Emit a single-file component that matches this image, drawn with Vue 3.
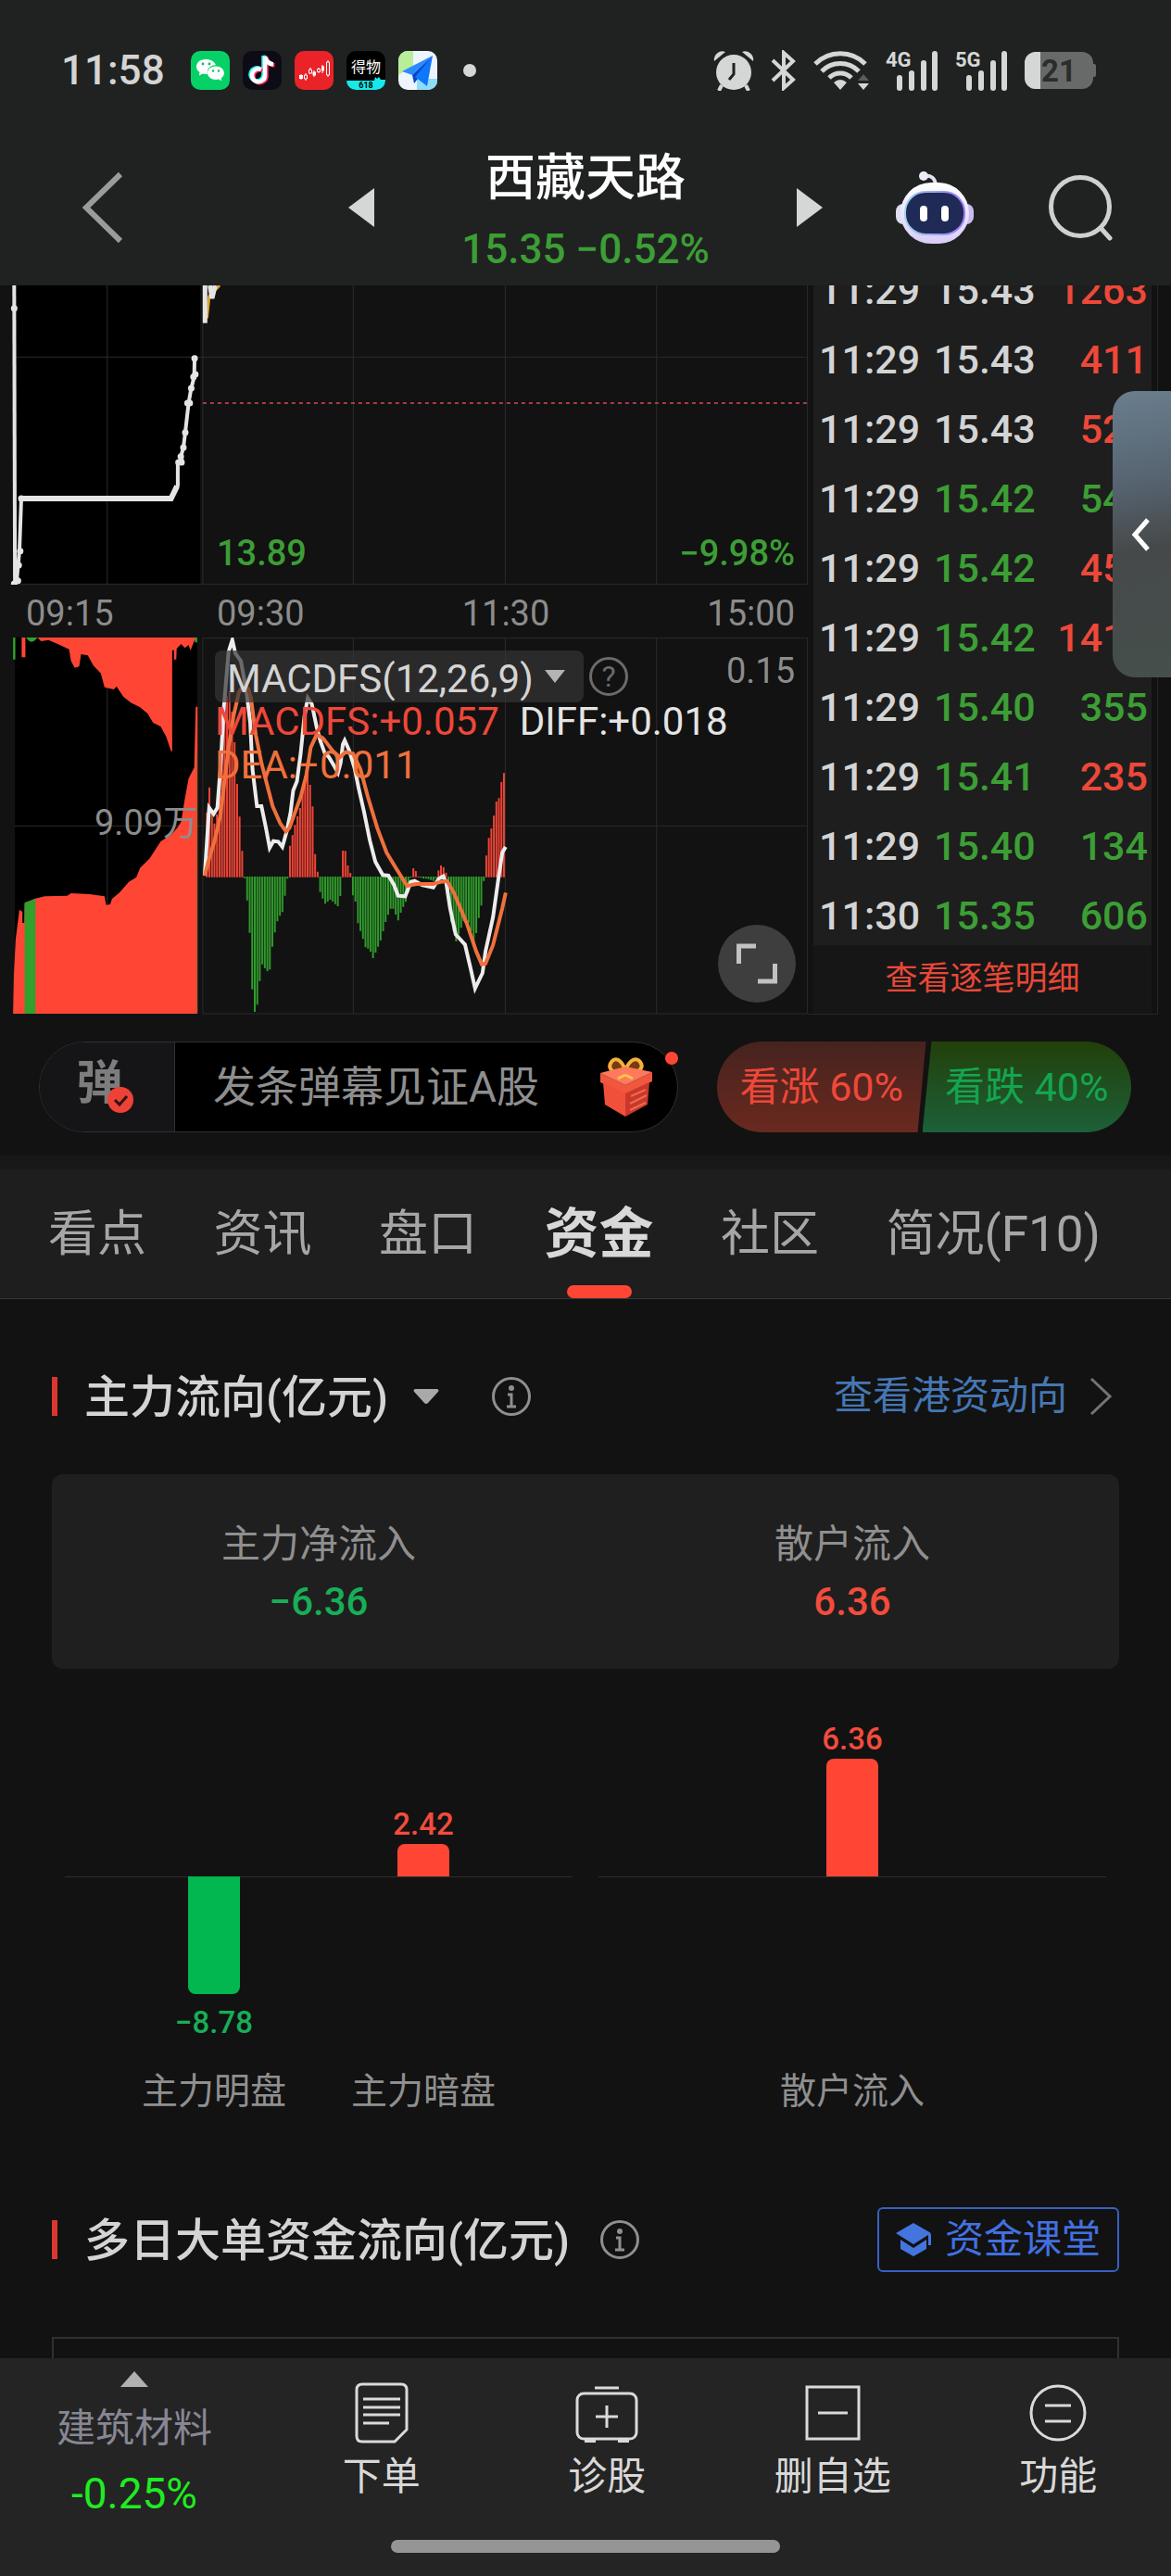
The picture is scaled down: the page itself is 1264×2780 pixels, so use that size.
<script setup>
import { ref } from 'vue'

const indicador = ref('MACDFS(12,26,9)')
const danmu = ref('')

const ticks = ref([
  { time: '11:29', price: '15.43', vol: '1263', p: 'flat', v: 'up' },
  { time: '11:29', price: '15.43', vol: '411', p: 'flat', v: 'up' },
  { time: '11:29', price: '15.43', vol: '528', p: 'flat', v: 'up' },
  { time: '11:29', price: '15.42', vol: '546', p: 'down', v: 'down' },
  { time: '11:29', price: '15.42', vol: '452', p: 'down', v: 'up' },
  { time: '11:29', price: '15.42', vol: '1417', p: 'down', v: 'up' },
  { time: '11:29', price: '15.40', vol: '355', p: 'down', v: 'down' },
  { time: '11:29', price: '15.41', vol: '235', p: 'down', v: 'up' },
  { time: '11:29', price: '15.40', vol: '134', p: 'down', v: 'down' },
  { time: '11:30', price: '15.35', vol: '606', p: 'down', v: 'down' },
])

const tabs = ['看点', '资讯', '盘口', '资金', '社区', '简况(F10)']
const activeTab = ref('资金')

// Each group is scaled to its own largest value
const groups = [
  [
    { label: '主力明盘', value: -8.78, text: '−8.78' },
    { label: '主力暗盘', value: 2.42, text: '2.42' },
  ],
  [{ label: '散户流入', value: 6.36, text: '6.36' }],
]

const barHeight = (group, item) => {
  const max = Math.max(...group.map((g) => Math.abs(g.value)))
  return Math.round((Math.abs(item.value) / max) * 127) + 'px'
}

// MACD histogram: outline points, bars are interpolated one per minute
const zero = 800
const outline = [
  [545, 800], [556, 545], [562, 500], [568, 590], [575, 630], [582, 590], [590, 480], [600, 300],
  [612, 170], [625, 300], [636, 520], [644, 640], [651, 760], [655, 800], [662, 875], [669, 985],
  [676, 1180], [683, 1242], [690, 1205], [697, 1115], [703, 1075], [712, 1102], [722, 1102],
  [730, 1015], [737, 970], [745, 930], [757, 910], [765, 840], [770, 800], [776, 700], [790, 630],
  [805, 570], [815, 480], [825, 430], [831, 510], [838, 580], [844, 730], [851, 785], [853, 800],
  [857, 845], [870, 885], [885, 870], [905, 893], [912, 855], [914, 800], [917, 715], [924, 710],
  [931, 760], [938, 785], [941, 800], [944, 855], [951, 870], [958, 945], [970, 990], [978, 1025],
  [990, 1032], [999, 1060], [1010, 1030], [1020, 1000], [1032, 945], [1045, 900], [1055, 900],
  [1065, 943], [1075, 905], [1090, 870], [1100, 800], [1106, 770], [1112, 775], [1118, 795],
  [1125, 800], [1150, 805], [1165, 812], [1172, 785], [1179, 760], [1192, 772], [1197, 800],
  [1205, 935], [1213, 960], [1219, 1013], [1232, 970], [1245, 930], [1258, 950], [1270, 1020],
  [1280, 940], [1287, 905], [1293, 850], [1296, 800], [1300, 760], [1305, 690], [1313, 655],
  [1320, 620], [1328, 555], [1334, 555], [1340, 518], [1347, 448], [1355, 500],
]

const valueAt = (x) => {
  for (let i = 1; i < outline.length; i++) {
    const [x0, y0] = outline[i - 1]
    const [x1, y1] = outline[i]
    if (x <= x1) return y0 + ((y1 - y0) * (x - x0)) / (x1 - x0)
  }
  return zero
}

let redBars = ''
let greenBars = ''
for (let i = 0; i < 119; i++) {
  const x = 554 + i * 6.74
  const y = valueAt(x)
  if (y < zero) redBars += `M${x.toFixed(1)} ${zero}V${y.toFixed(0)}`
  else greenBars += `M${x.toFixed(1)} ${zero - 2}V${(y + 2).toFixed(0)}`
}

const diffLine =
  '548,795 560,575 572,595 582,575 590,450 600,240 612,70 622,32 630,75 645,100 660,200 670,300 676,450 688,570 700,570 712,640 722,705 732,683 745,685 756,702 768,650 778,590 785,520 795,490 805,400 815,280 824,220 835,240 848,315 858,360 870,400 880,410 895,440 905,462 912,430 918,370 923,357 935,390 950,450 960,510 975,590 990,680 1005,750 1025,793 1040,795 1055,825 1066,860 1085,862 1100,815 1110,812 1130,825 1160,833 1175,805 1187,797 1195,820 1205,900 1220,985 1245,1018 1260,1095 1272,1160 1280,1140 1292,1110 1300,1040 1320,930 1335,800 1345,720 1354,702'
const deaLine =
  '548,795 560,740 575,680 590,600 600,500 612,380 625,280 640,200 650,185 665,190 672,220 685,340 700,430 715,500 730,570 750,625 766,652 775,640 790,590 805,540 820,470 832,380 848,338 865,350 890,390 910,412 925,395 945,400 965,450 985,540 1010,640 1035,720 1060,770 1090,828 1115,822 1160,822 1180,815 1197,812 1215,850 1250,950 1275,1040 1290,1082 1300,1080 1320,1020 1345,900 1354,850'
</script>

<template>
  <div class="app">
    <header>
      <div class="status">
        <span class="clock">11:58</span>
        <div class="apps">
          <svg viewBox="0 0 42 42">
            <rect width="42" height="42" rx="10" fill="#06d167" />
            <path d="M16 9c-6 0-10 3.600-10 8 0 2.600 1.400 4.600 3.500 6l-.6 3.500 4-2a13 13 0 0 0 5 .4c-1-6 4-10 9-9.500C26 11.500 21.500 9 16 9z" fill="#fff" />
            <path d="M27 16.500c-5.200 0-9 3.200-9 7.200s3.800 7.200 9 7.200c1 0 2-.1 3-.4l3.300 1.800-.6-3c2-1.300 3.200-3.300 3.200-5.600 0-4-4-7.200-8.900-7.200z" fill="#fff" />
            <circle cx="13" cy="14" r="1.400" fill="#06c160" /><circle cx="20" cy="14" r="1.400" fill="#06c160" />
            <circle cx="24" cy="21.500" r="1.200" fill="#06c160" /><circle cx="30" cy="21.500" r="1.200" fill="#06c160" />
          </svg>
          <svg viewBox="0 0 42 42">
            <rect width="42" height="42" rx="10" fill="#0c0b16" />
            <g fill="none" stroke-width="4.500">
              <path d="M20 20a7 7 0 1 0 4 6V6c1 5 4 8 9 8.500" stroke="#25f4ee" transform="translate(-1.500 -1)" />
              <path d="M20 20a7 7 0 1 0 4 6V6c1 5 4 8 9 8.500" stroke="#fe2c55" transform="translate(1.500 1)" />
              <path d="M20 20a7 7 0 1 0 4 6V6c1 5 4 8 9 8.500" stroke="#fff" />
            </g>
          </svg>
          <svg viewBox="0 0 42 42">
            <rect width="42" height="42" rx="10" fill="#e92328" />
            <path d="M7 25v6M12 24v8M17 18v7M21 21v7M26 18v6M30 15v9M36 10v18" stroke="#fff" stroke-width="1" />
            <path d="M5 26h4v4H5zM19.500 22.500h3.500v4h-3.500zM29 16.500h3v5h-3z" fill="#fff" />
            <path d="M10.500 26h3v4h-3zM15.500 20h3v4h-3zM24.500 19.500h3v3h-3zM34.500 12h3v14h-3z" fill="#e92328" stroke="#fff" />
          </svg>
          <svg viewBox="0 0 42 42">
            <clipPath id="dw"><rect width="42" height="42" rx="10" /></clipPath>
            <g clip-path="url(#dw)">
              <rect width="42" height="42" fill="#000" />
              <path d="M0 32h30l1-4 2 2 2-2 2 3h5v11H0z" fill="#17e9ea" />
              <text x="21" y="23" text-anchor="middle" font-size="16" fill="#fff">得物</text>
              <text x="21" y="40" text-anchor="middle" font-size="9" font-weight="700" fill="#000">618</text>
            </g>
          </svg>
          <svg viewBox="0 0 42 42">
            <clipPath id="mp"><rect width="42" height="42" rx="10" /></clipPath>
            <g clip-path="url(#mp)">
              <rect width="42" height="42" fill="#eef4fb" />
              <path d="M0 0h16v16L0 26z" fill="#b8ee9a" />
              <path d="M20 30h22v12H20z" fill="#8edcf7" />
              <path d="M37 5 4 22l11 4z" fill="#2a8bff" />
              <path d="M37 5 15 26l2 9 4-5z" fill="#0546c8" />
              <path d="M37 5 18 28l13 10z" fill="#0d78fb" />
            </g>
          </svg>
        </div>
        <i class="more-dot"></i>
        <div class="signals">
          <svg width="44" height="44" viewBox="0 0 44 44" fill="#d5d7d6">
            <path d="M1 12a9 9 0 0 1 12-10zM43 12A9 9 0 0 0 31 2z" />
            <circle cx="22" cy="24" r="19" />
            <path d="m9 38-3 6M35 38l3 6" stroke="#d5d7d6" stroke-width="4" />
            <path d="M22 14v12l-5 6" fill="none" stroke="#202221" stroke-width="3" />
          </svg>
          <svg width="28" height="44" viewBox="0 0 28 44" fill="none" stroke="#d5d7d6" stroke-width="4">
            <path d="m2 11 22 21-10 9V3l10 9L2 33" />
          </svg>
          <svg width="60" height="44" viewBox="0 0 60 44" fill="none" stroke="#d5d7d6" stroke-width="5">
            <path d="M2 15a38 38 0 0 1 54 0M9 23a28 28 0 0 1 40 0M17 30a17 17 0 0 1 24 0" />
            <path d="m22 35q7-6 14 0l-7 8z" fill="#d5d7d6" stroke="none" />
            <path d="m48 33 6-7 6 7z" fill="#5a5c5b" stroke="none" />
            <path d="m48 36h12l-6 7z" fill="#d5d7d6" stroke="none" />
          </svg>
          <svg v-for="net in ['4G', '5G']" :key="net" class="net" width="57" height="52" viewBox="0 -4 57 52">
            <text x="0" y="18" font-size="22" font-weight="700" fill="#d5d7d6">{{ net }}</text>
            <path d="M15 30v11M28 25v16M41 14v27M53 4v37" stroke="#d5d7d6" stroke-width="6" stroke-linecap="round" />
          </svg>
          <svg width="77" height="40" viewBox="0 0 77 40">
            <clipPath id="bt"><rect width="74" height="40" rx="12" /></clipPath>
            <g clip-path="url(#bt)">
              <rect width="74" height="40" fill="#686a69" />
              <rect width="17" height="40" fill="#d5d7d6" />
            </g>
            <rect x="72" y="13" width="5" height="14" rx="2" fill="#686a69" />
            <text x="37" y="32" text-anchor="middle" font-size="33" font-weight="700" fill="#2b2d2c">21</text>
          </svg>
        </div>
      </div>

      <nav class="topbar">
        <button class="back" aria-label="返回">
          <svg width="46" height="78" viewBox="0 0 46 78" fill="none" stroke="#9a9c9b" stroke-width="6"><path d="M42 3 5 39l37 36" /></svg>
        </button>
        <div class="switcher">
          <button aria-label="上一只"><svg width="28" height="42" viewBox="0 0 28 42"><path d="M28 0v42L0 21z" fill="#d5d7d6" /></svg></button>
          <div class="stock">
            <h1>西藏天路</h1>
            <p>15.35 −0.52%</p>
          </div>
          <button aria-label="下一只"><svg width="28" height="42" viewBox="0 0 28 42"><path d="M0 0v42l28-21z" fill="#d5d7d6" /></svg></button>
        </div>
        <div class="tools">
          <button aria-label="助手">
            <svg width="84" height="80" viewBox="0 0 84 80">
              <defs>
                <linearGradient id="head" x1="0" y1="0" x2="0" y2="1"><stop offset="0" stop-color="#fff" /><stop offset="1" stop-color="#d9cdf8" /></linearGradient>
                <linearGradient id="rim" x1="0" y1="0" x2="1" y2="0"><stop offset="0" stop-color="#9dd4f0" /><stop offset="1" stop-color="#9a78f2" /></linearGradient>
              </defs>
              <path d="M30 6q12-2 13 10" fill="none" stroke="#e4e2f0" stroke-width="4" />
              <circle cx="30" cy="6" r="5" fill="#eeedf7" />
              <rect x="0" y="36" width="16" height="22" rx="8" fill="#dfdcf3" />
              <rect x="68" y="36" width="16" height="22" rx="8" fill="#c9bdf0" />
              <rect x="5" y="13" width="74" height="66" rx="33" fill="url(#head)" />
              <rect x="10" y="23" width="64" height="46" rx="22" fill="#202a56" stroke="url(#rim)" stroke-width="2" />
              <rect x="26" y="38" width="8" height="17" rx="4" fill="#fff" />
              <rect x="49" y="38" width="8" height="17" rx="4" fill="#fff" />
            </svg>
          </button>
          <button aria-label="搜索">
            <svg width="72" height="72" viewBox="0 0 72 72" fill="none" stroke="#cfd1d0" stroke-width="5" stroke-linecap="round"><circle cx="35" cy="35" r="31.500" /><path d="m57 58 10 11" /></svg>
          </button>
        </div>
      </nav>
    </header>

    <main>
      <section class="market">
        <div class="charts">
          <div class="price-chart">
            <svg viewBox="0 24 2163 969" preserveAspectRatio="none">
              <rect x="40" y="24" width="496" height="967" fill="#000" />
              <path class="grid" d="M287 24V992M543 24V992M946 24V992M1353 24V992M1758 24V992M2162 24V992M40 256H2162M40 991H2162" />
              <path class="line" d="M543 405H2162" stroke="#a83a4c" stroke-width="2" stroke-dasharray="4 4" />
              <path class="line" d="M554 130 560 60 575 40 588 24" stroke="#e0a030" stroke-width="3" />
              <path class="line" d="M549 24V146" stroke="#e4e4e4" stroke-width="5" />
              <path class="line" d="M562 24 568 66 576 24" stroke="#e4e4e4" stroke-width="5" />
              <path class="line" d="M38 24 40 990" stroke="#e4e4e4" stroke-width="4" />
              <path class="line" d="M44 988 52 884 57 714M458 714 476 672V597H488L485 575 491 549 496 500 505 405 512 357 520 320 521 260" stroke="#e4e4e4" stroke-width="4" />
              <path class="line" d="M57 714H458L474 674" stroke="#e4e4e4" stroke-width="6" />
              <path class="line dots" d="M38 98h.1M38 990h.1M48 980h.1M50 930h.1M54 884h.1M57 714h.1M478 597h.1M486 597h.1M484 578h.1M491 549h.1M496 500h.1M502 405h.1M508 405h.1M512 357h.1M518 320h.1M523 312h.1M521 260h.1" />
            </svg>
            <span class="low">13.89</span>
            <span class="low-pct">−9.98%</span>
          </div>

          <div class="axis">
            <span>09:15</span><span>09:30</span><span class="mid">11:30</span><span class="end">15:00</span>
          </div>

          <div class="macd-chart">
            <svg viewBox="0 24 2163 1221" preserveAspectRatio="none">
              <rect x="40" y="24" width="488" height="1218" fill="#000" />
              <path class="grid" d="M38 634H2162M287 24V1242M543 24V1242M946 24V1242M1353 24V1242M1758 24V1242M2162 24V1242M543 26H2162M543 1242H2162" />
              <path fill="#ff4635" d="M37 24H58V88H68V24H100L110 36 130 32 160 48 185 62 190 100 200 122 212 118 217 78 235 82 250 115 270 140 280 185 305 192 312 182 330 215 350 235 375 250 395 270 410 300 430 312 445 345 458 392H461V65H466V95H472L473 60 485 45 495 58 505 48 510 66 520 35 528 24z" />
              <path fill="#ff4635" d="M35 1242 37 1120 42 1000 52 905 60 912V948H65L66 885 92 870 120 862 180 860 190 852 240 855 280 862 284 890 295 888 300 870 320 850 345 815 365 800 375 770 400 740 430 685 460 660 475 640 485 620 495 545 505 480 520 445 524 248H529V1242z" />
              <path fill="#32a02d" d="M35 24H41V95H35zM70 24Q84 52 100 24zM522 24H528V40H522zM66 882 95 870V1242H66z" />
              <path class="line" d="M526 400V1242" stroke="#a8642c" stroke-width="1" />
              <path class="line" :d="redBars" stroke="#ee4436" stroke-width="2" />
              <path class="line" :d="greenBars" stroke="#2f9a2b" stroke-width="2" />
              <polyline class="line" :points="diffLine" stroke="#ececec" stroke-width="4" />
              <polyline class="line" :points="deaLine" stroke="#f0703c" stroke-width="4" />
            </svg>
            <span class="volume">9.09万</span>
            <span class="scale">0.15</span>
            <div class="legend">
              <div class="picker">
                <label class="select">
                  <select v-model="indicador" aria-label="指标">
                    <option>MACDFS(12,26,9)</option>
                  </select>
                  <svg width="22" height="14" viewBox="0 0 22 14"><path d="M0 0h22L11 14z" fill="#b4b4b4" /></svg>
                </label>
                <button class="help" aria-label="说明">?</button>
              </div>
              <p><span class="macd">MACDFS:+0.057</span><span class="diff">DIFF:+0.018</span></p>
              <p class="dea">DEA:−0.011</p>
            </div>
            <button class="expand" aria-label="全屏">
              <svg width="44" height="52" viewBox="0 0 44 52" fill="none" stroke="#c2c2c2" stroke-width="5"><path d="M2.500 26V7H21M23 45h18.500V26" /></svg>
            </button>
          </div>
        </div>

        <div class="tape">
          <div class="tape-body">
            <table>
              <tbody>
                <tr v-for="(t, i) in ticks" :key="i">
                  <td class="time">{{ t.time }}</td>
                  <td :class="t.p">{{ t.price }}</td>
                  <td class="vol" :class="t.v">{{ t.vol }}</td>
                </tr>
              </tbody>
            </table>
          </div>
          <a href="#">查看逐笔明细</a>
        </div>

        <button class="drawer" aria-label="展开">
          <svg width="20" height="36" viewBox="0 0 20 36" fill="none" stroke="#fff" stroke-width="5"><path d="M18 2 4 18l14 16" /></svg>
        </button>
      </section>

      <section class="danmu">
        <div class="danmu-box">
          <button class="toggle" aria-label="弹幕开关">
            <span>弹</span>
            <svg width="28" height="28" viewBox="0 0 28 28"><circle cx="14" cy="14" r="14" fill="#ee4236" /><path d="m8 14 5 5 8-9" fill="none" stroke="#2a1513" stroke-width="3" /></svg>
          </button>
          <input v-model="danmu" type="text" placeholder="发条弹幕见证A股" aria-label="弹幕" />
          <svg class="gift" width="58" height="64" viewBox="0 0 58 64">
            <path d="M28 18C14 18 8 12 13 5s14 0 15 13c1-13 11-20 16-13s-2 13-16 13z" fill="#7a3a10" stroke="#f5b23c" stroke-width="4" />
            <path d="M1 17 28 30 57 16v10L28 40 1 27z" fill="#f1573e" />
            <path d="M4 27 28 39v25L6 51z" fill="#f0503a" />
            <path d="M28 39 54 27l-2 24-24 13z" fill="#c9382b" />
            <path d="M1 17 28 10l29 6-29 14z" fill="#ff7a5c" />
            <path d="m34 42 16-7M33 50l18-9M33 57l17-8" stroke="#ee6a4c" stroke-width="2" />
            <path d="m28 19-8 4M28 19l8 4" stroke="#f9c64c" stroke-width="3" />
          </svg>
          <i class="badge"></i>
        </div>
        <div class="vote">
          <button class="bull">看涨 60%</button>
          <button class="bear">看跌 40%</button>
        </div>
      </section>

      <nav class="tabs">
        <button v-for="t in tabs" :key="t" :class="{ active: t === activeTab }" @click="activeTab = t">{{ t }}</button>
      </nav>

      <section class="flow">
        <div class="heading">
          <h2>主力流向(亿元)</h2>
          <svg class="caret" width="28" height="16" viewBox="0 0 28 16"><path d="M2 0h24q3 1 0 4L16 15q-2 2-4 0L2 4q-3-3 0-4z" fill="#a9a9a9" /></svg>
          <svg width="42" height="42" viewBox="0 0 42 42"><circle cx="21" cy="21" r="19.500" fill="none" stroke="#8f8f8f" stroke-width="3" /><circle cx="21" cy="12" r="3" fill="#8f8f8f" /><path d="M17 19h4v13M16 32h10" fill="none" stroke="#8f8f8f" stroke-width="3" /></svg>
          <a class="more" href="#">查看港资动向
            <svg width="24" height="42" viewBox="0 0 24 42" fill="none" stroke="#747474" stroke-width="3"><path d="m2 2 20 19L2 40" /></svg>
          </a>
        </div>

        <dl class="summary">
          <div><dt>主力净流入</dt><dd class="out">−6.36</dd></div>
          <div><dt>散户流入</dt><dd class="in">6.36</dd></div>
        </dl>

        <div class="bars">
          <div v-for="(group, g) in groups" :key="g" class="group">
            <div v-for="item in group" :key="item.label" class="slot">
              <div class="above">
                <template v-if="item.value > 0">
                  <span class="in">{{ item.text }}</span>
                  <i class="bar" :style="{ height: barHeight(group, item) }"></i>
                </template>
              </div>
              <div class="below">
                <template v-if="item.value < 0">
                  <i class="bar neg" :style="{ height: barHeight(group, item) }"></i>
                  <span class="out">{{ item.text }}</span>
                </template>
              </div>
              <span class="name">{{ item.label }}</span>
            </div>
          </div>
        </div>

        <div class="heading second">
          <h2>多日大单资金流向(亿元)</h2>
          <svg class="info" width="42" height="42" viewBox="0 0 42 42"><circle cx="21" cy="21" r="19.500" fill="none" stroke="#8f8f8f" stroke-width="3" /><circle cx="21" cy="12" r="3" fill="#8f8f8f" /><path d="M17 19h4v13M16 32h10" fill="none" stroke="#8f8f8f" stroke-width="3" /></svg>
          <button class="class-btn">
            <svg width="40" height="36" viewBox="0 0 40 36" fill="#4474de"><path d="M19 0 38 11 19 23 0 11z" /><path d="m5 18 14 9 14-9v10l-14 8-14-8z" /><path d="M35 12h3v12h-3z" /></svg>
            资金课堂
          </button>
        </div>
        <div class="frame"></div>
      </section>
    </main>

    <footer>
      <a class="sector" href="#">
        <svg width="30" height="17" viewBox="0 0 30 17"><path d="M15 0 30 17H0z" fill="#b0b0b0" /></svg>
        <span>建筑材料</span>
        <b>-0.25%</b>
      </a>
      <button>
        <svg width="68" height="66" viewBox="0 0 68 66" fill="none" stroke="#dadada" stroke-width="3"><path d="M13 2h42q6 0 6 6v43L48 64H13q-6 0-6-6V8q0-6 6-6z" /><path d="M14 18h40M14 27h40M14 35h40M14 44h28" /></svg>
        下单
      </button>
      <button>
        <svg width="68" height="66" viewBox="0 0 68 66" fill="none" stroke="#dadada" stroke-width="3"><rect x="2" y="12" width="64" height="49" rx="7" /><path d="M21 6h26M34 25v24M22 37h24" /><path d="M10 63h12M46 63h12" stroke-width="4" /></svg>
        诊股
      </button>
      <button>
        <svg width="68" height="66" viewBox="0 0 68 66" fill="none" stroke="#dadada" stroke-width="3"><path d="M6 5h56v56H6zM18 33h32" /></svg>
        删自选
      </button>
      <button>
        <svg width="68" height="66" viewBox="0 0 68 66" fill="none" stroke="#dadada" stroke-width="3"><circle cx="34" cy="33" r="29" /><path d="M20 25h28M20 42h28" /></svg>
        功能
      </button>
      <i class="home"></i>
    </footer>
  </div>
</template>

<style>
body {
  margin: 0;
  background: #121212;
}
</style>

<style scoped>
.app {
  display: flex;
  flex-direction: column;
  height: 100vh;
  overflow: hidden;
  background: #121212;
  color: #d4d4d4;
  font-family: Roboto, 'Noto Sans CJK SC', sans-serif;
}
.app * {
  box-sizing: border-box;
}
svg {
  display: block;
  flex-shrink: 0;
}
button {
  padding: 0;
  border: 0;
  background: none;
  color: inherit;
  font: inherit;
}
a {
  text-decoration: none;
}
h1, h2, p, dl, dd {
  margin: 0;
}
header {
  background: #202221;
}
.status {
  display: flex;
  align-items: center;
  height: 140px;
  padding: 12px 81px 0 66px;
}
.clock {
  width: 140px;
  font-size: 44px;
  font-weight: 500;
}
.apps {
  display: flex;
  gap: 14px;
}
.apps svg {
  width: 42px;
  height: 42px;
}
.more-dot {
  width: 14px;
  height: 14px;
  margin-left: 28px;
  border-radius: 50%;
  background: #d5d7d6;
}
.signals {
  display: flex;
  align-items: center;
  gap: 18px;
  margin-left: auto;
}
.topbar {
  display: grid;
  grid-template-columns: 1fr 512px 1fr;
  align-items: center;
  height: 168px;
}
.back {
  justify-self: start;
  margin-left: 88px;
}
.switcher {
  display: flex;
  align-items: center;
  justify-content: space-between;
}
.stock {
  padding-top: 14px;
  text-align: center;
}
.stock h1 {
  color: #fff;
  font-size: 54px;
  font-weight: 500;
  line-height: 76px;
}
.stock p {
  color: #3c9e35;
  font-size: 44px;
  font-weight: 500;
  line-height: 76px;
}
.tools {
  display: flex;
  align-items: center;
  justify-content: flex-end;
  gap: 80px;
  padding-right: 61px;
}
main {
  flex: 1;
  min-height: 0;
  overflow: hidden;
}
.market {
  position: relative;
  display: flex;
  height: 787px;
  padding-right: 14px;
}
.charts {
  flex: 1;
  min-width: 0;
}
.price-chart,
.macd-chart {
  position: relative;
  height: 323px;
}
.macd-chart {
  height: 407px;
}
.price-chart > svg,
.macd-chart > svg {
  width: 100%;
  height: 100%;
}
.grid,
.line {
  fill: none;
  vector-effect: non-scaling-stroke;
}
.grid {
  stroke: #2b2b2b;
  stroke-width: 1px;
}
.dots {
  stroke: #e4e4e4;
  stroke-width: 7px;
  stroke-linecap: round;
}
.low,
.low-pct,
.volume,
.scale {
  position: absolute;
  font-size: 38px;
  line-height: 44px;
}
.low,
.low-pct {
  bottom: 12px;
  color: #3c9e35;
  font-weight: 500;
}
.low {
  left: 234px;
}
.low-pct,
.scale {
  right: 14px;
}
.scale {
  top: 14px;
  color: #8c8c8c;
}
.volume {
  top: 178px;
  left: 102px;
  color: #8c8c8c;
}
.axis {
  display: grid;
  grid-template-columns: 206px 230px 164px 1fr;
  align-items: center;
  height: 57px;
  padding: 4px 14px 0 28px;
  color: #8c8c8c;
  font-size: 38px;
  line-height: 44px;
}
.axis .mid {
  text-align: center;
}
.axis .end {
  text-align: right;
}
.legend {
  position: absolute;
  top: 14px;
  left: 232px;
  font-size: 42px;
  line-height: 47px;
  white-space: nowrap;
}
.picker {
  display: flex;
  align-items: center;
  gap: 6px;
  margin-bottom: -3px;
}
.select {
  display: flex;
  align-items: center;
  gap: 12px;
  height: 56px;
  padding: 0 20px 0 13px;
  border-radius: 8px;
  background: rgba(54, 52, 52, 0.7);
}
.select select {
  padding: 4px 0 0;
  border: 0;
  appearance: none;
  background: none;
  color: #d4d4d4;
  font: inherit;
}
.help {
  width: 42px;
  height: 42px;
  border: 3px solid #6b6b6b;
  border-radius: 50%;
  color: #6b6b6b;
  font-size: 32px;
  line-height: 36px;
}
.legend p {
  display: flex;
  gap: 22px;
}
.macd {
  color: #ee4839;
}
.diff {
  color: #e4e4e4;
}
.dea {
  color: #f0703c;
}
.expand {
  position: absolute;
  right: 13px;
  bottom: 13px;
  display: grid;
  place-items: center;
  width: 84px;
  height: 84px;
  border-radius: 50%;
  background: #3e3e3e;
}
.tape {
  display: flex;
  flex-direction: column;
  width: 378px;
  padding: 0 6px;
  border: solid #262626;
  border-width: 0 1px 1px 0;
}
.tape-body {
  height: 713px;
  overflow: hidden;
  background: #1e1e1e;
}
.tape table {
  width: 100%;
  margin-top: -33px;
  border-collapse: collapse;
  font-size: 43px;
  font-weight: 500;
}
.tape td {
  height: 75px;
  padding: 0 0 0 6px;
  line-height: 52px;
}
.tape td.time {
  width: 124px;
}
.tape td.vol {
  padding: 0 4px 0 0;
  text-align: right;
}
.up {
  color: #ee4839;
}
.down {
  color: #3c9e35;
}
.tape a {
  flex: 1;
  background: #161616;
  color: #e84838;
  font-size: 35px;
  line-height: 74px;
  text-align: center;
}
.drawer {
  position: absolute;
  top: 114px;
  right: 0;
  display: grid;
  place-items: center;
  width: 63px;
  height: 309px;
  padding-right: 4px;
  border-radius: 24px 0 0 24px;
  background: linear-gradient(170deg, #6a7e8e 0%, #566470 32%, #46494a 55%, #454f4c 100%);
}
.danmu {
  display: flex;
  gap: 42px;
  height: 152px;
  padding: 29px 43px 25px 42px;
}
.danmu-box {
  position: relative;
  display: flex;
  flex: 1;
  align-items: center;
  min-width: 0;
  height: 98px;
  border: 1px solid #303030;
  border-radius: 49px;
  background: #000;
}
.toggle {
  position: relative;
  width: 146px;
  height: 100%;
  padding: 0 16px 8px 0;
  border-right: 1px solid #303030;
  border-radius: 49px 0 0 49px;
  background: #151517;
  color: #7d7d7d;
  font-size: 50px;
  font-weight: 700;
  line-height: 60px;
}
.toggle svg {
  position: absolute;
  right: 44px;
  bottom: 20px;
}
.danmu-box input {
  flex: 1;
  min-width: 0;
  padding: 0 0 0 41px;
  border: 0;
  outline: 0;
  background: none;
  color: #d4d4d4;
  font: inherit;
  font-size: 46px;
}
.danmu-box input::placeholder {
  color: #8e8e8e;
}
.gift {
  margin-right: 26px;
}
.badge {
  position: absolute;
  top: 10px;
  right: -1px;
  width: 14px;
  height: 14px;
  border-radius: 50%;
  background: #ff4635;
}
.vote {
  display: flex;
  width: 447px;
  height: 98px;
  overflow: hidden;
  border-radius: 49px;
  font-size: 43px;
  line-height: 56px;
}
.vote button {
  flex: 1;
}
.bull {
  background: linear-gradient(#46231f, #6a291f);
  color: #ee4839;
  clip-path: polygon(0 0, 100% 0, calc(100% - 9px) 100%, 0 100%);
}
.bear {
  margin-left: -4px;
  background: linear-gradient(#22400a, #1d6039);
  color: #14a550;
  clip-path: polygon(10px 0, 100% 0, 100% 100%, 0 100%);
}
.tabs {
  display: flex;
  justify-content: space-between;
  height: 155px;
  padding: 0 76px 0 52px;
  border-top: 15px solid #181818;
  border-bottom: 1px solid #363636;
  background: #1e1e1e;
  color: #a6a6a6;
  font-size: 53px;
  line-height: 76px;
}
.tabs button {
  position: relative;
}
.tabs .active {
  color: #d8d8d8;
  font-size: 59px;
  font-weight: 700;
}
.tabs .active::after {
  content: '';
  position: absolute;
  bottom: 0;
  left: calc(50% - 35px);
  width: 70px;
  height: 14px;
  border-radius: 7px;
  background: #ff4635;
}
.flow {
  padding: 70px 56px 0;
}
.heading {
  display: flex;
  align-items: center;
  height: 70px;
}
.heading::before {
  content: '';
  width: 6px;
  height: 42px;
  background: #dc3630;
}
.heading h2 {
  margin-left: 29px;
  padding-top: 3px;
  font-size: 49px;
  font-weight: 500;
  line-height: 70px;
}
.caret {
  margin: 0 57px 0 27px;
}
.info {
  margin-left: 33px;
}
.more {
  display: flex;
  align-items: center;
  gap: 24px;
  margin: 0 8px 0 auto;
  color: #4577b3;
  font-size: 42px;
  line-height: 56px;
}
.summary {
  display: flex;
  height: 210px;
  margin-top: 49px;
  border-radius: 12px;
  background: #1f1f1f;
  text-align: center;
}
.summary div {
  flex: 1;
  padding-top: 45px;
}
.summary dt {
  color: #8f8f8f;
  font-size: 42px;
  line-height: 62px;
}
.summary dd {
  font-size: 42px;
  font-weight: 500;
  line-height: 62px;
}
.in {
  color: #f24c3d;
}
.out {
  color: #18ae57;
}
.bars {
  display: flex;
  gap: 28px;
  padding: 55px 14px 0;
}
.group {
  display: flex;
  flex: 1;
  justify-content: center;
  background: linear-gradient(#2e2e2e, #2e2e2e) 0 169px / 100% 1px no-repeat;
}
.slot {
  display: flex;
  flex-direction: column;
  align-items: center;
  width: 226px;
  font-size: 33px;
  font-weight: 500;
  line-height: 42px;
}
.above,
.below {
  display: flex;
  flex-direction: column;
  align-items: center;
}
.above {
  justify-content: flex-end;
  height: 169px;
}
.below {
  gap: 10px;
  height: 204px;
}
.bar {
  width: 56px;
  border-radius: 8px 8px 0 0;
  background: #ff4635;
}
.bar.neg {
  border-radius: 0 0 8px 8px;
  background: #02b74f;
}
.name {
  color: #8f8f8f;
  font-size: 39px;
  font-weight: 400;
  line-height: 56px;
}
.second {
  margin-top: 97px;
}
.class-btn {
  display: flex;
  align-items: center;
  gap: 13px;
  height: 70px;
  margin-left: auto;
  padding: 0 18px;
  border: 2px solid #3860c4;
  border-radius: 6px;
  color: #4270e0;
  font-size: 42px;
  line-height: 56px;
}
.frame {
  height: 200px;
  margin-top: 70px;
  border: 2px solid #303030;
}
footer {
  position: relative;
  display: flex;
  height: 235px;
  background: #242424;
}
footer button {
  display: flex;
  flex: 1;
  flex-direction: column;
  align-items: center;
  gap: 8px;
  height: 160px;
  padding-top: 26px;
  color: #d8d8d8;
  font-size: 42px;
  line-height: 56px;
}
.sector {
  display: flex;
  flex-direction: column;
  align-items: center;
  width: 290px;
  padding-top: 14px;
  color: #878794;
  font-size: 42px;
  line-height: 70px;
}
.sector span {
  margin-top: 10px;
}
.sector b {
  color: #1fec22;
  font-size: 46px;
  font-weight: 400;
}
.home {
  position: absolute;
  bottom: 25px;
  left: calc(50% - 210px);
  width: 420px;
  height: 14px;
  border-radius: 7px;
  background: #959595;
}
</style>
